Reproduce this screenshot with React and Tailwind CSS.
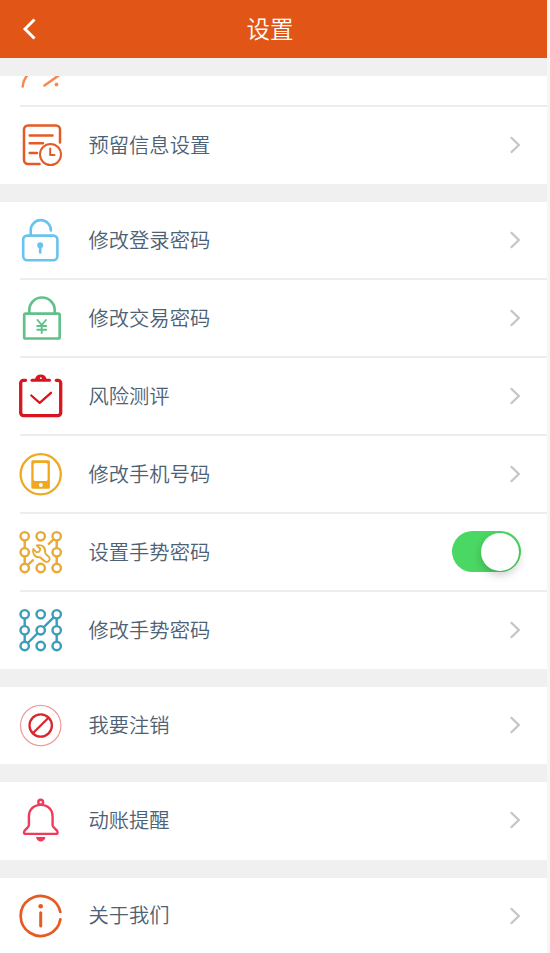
import { clsx } from 'clsx';

const svgProps = {
  width: 48,
  height: 48,
  viewBox: '0 0 48 48',
  fill: 'none',
  strokeLinecap: 'round',
  strokeLinejoin: 'round',
};

function ProfileIcon() {
  return (
    <svg {...svgProps} stroke="#f68a50" strokeWidth="2.6">
      <path d="M5.7 43.5C6 39 7.5 35.5 10.5 32M27.5 42.5L43 31.5" />
      <circle cx="39.5" cy="41.5" r="1.9" fill="#f68a50" stroke="none" />
    </svg>
  );
}

function ReservedInfoIcon() {
  return (
    <svg {...svgProps} stroke="#e35a27" strokeWidth="2.5">
      <path d="M43 21.5V8.5a4 4 0 0 0-4-4H11a4 4 0 0 0-4 4V39a4 4 0 0 0 4 4H22.5" />
      <path d="M12.7 14.5H35.5M12.7 22.3H26M12.7 32H20" />
      <circle cx="33.5" cy="33.5" r="10.5" strokeWidth="2" />
      <path d="M33.2 27.5V34H37.5" strokeWidth="2" />
    </svg>
  );
}

function LoginLockIcon() {
  return (
    <svg {...svgProps} stroke="#69c3ee" strokeWidth="2.6">
      <rect x="6.2" y="19.6" width="34.2" height="24.6" rx="4" />
      <path d="M13.7 19V14A10.1 10.1 0 0 1 33.9 14.5" />
      <circle cx="23.2" cy="29.3" r="3" fill="#69c3ee" stroke="none" />
      <path d="M23.2 30V36.5" />
    </svg>
  );
}

function TradeLockIcon() {
  return (
    <svg {...svgProps} stroke="#62c08a" strokeWidth="2.7">
      <rect x="7.2" y="19.7" width="35.5" height="24.8" rx="1.5" />
      <path d="M12.3 19V16A12.7 12.5 0 0 1 37.7 16V19" />
      <path
        d="M20.5 26L24.7 31L29 26M24.7 31V39M20.2 32H29.2M20.2 35.7H29.2"
        strokeWidth="1.9"
      />
    </svg>
  );
}

function RiskIcon() {
  return (
    <svg {...svgProps} stroke="#d8151f" strokeWidth="3.3">
      <path d="M8.5 8.3H6.5a2.8 2.8 0 0 0-2.8 2.8V40.8a2.8 2.8 0 0 0 2.8 2.8H40.9a2.8 2.8 0 0 0 2.8-2.8V11.1a2.8 2.8 0 0 0-2.8-2.8H39.3" />
      <path d="M15 8.2H32.5" strokeWidth="3" />
      <path d="M17.8 8C18.5 4.3 20.5 2.5 23.8 2.5S29.1 4.3 29.8 8Z" fill="#d8151f" stroke="none" />
      <circle cx="23.8" cy="6.2" r="0.9" fill="#fff" stroke="none" />
      <path d="M14.3 23.5L22.7 30.8L34 20.8" strokeWidth="2.3" />
    </svg>
  );
}

function PhoneIcon() {
  return (
    <svg {...svgProps} stroke="#f0a81e" strokeWidth="2.3">
      <circle cx="23.7" cy="24.3" r="20.1" />
      <rect x="14.3" y="10.3" width="18.6" height="28.4" rx="1.5" fill="#f0a81e" stroke="none" />
      <rect x="16.6" y="13" width="14" height="18" rx="1.5" fill="#fff" stroke="none" />
      <circle cx="23.8" cy="35.1" r="2" fill="#fff" stroke="none" />
    </svg>
  );
}

function Dots({ skipCenter }) {
  const points = [8.3, 24.3, 40].flatMap((cy) => [7.7, 23.7, 39.7].map((cx) => [cx, cy]));
  return points
    .filter((_, i) => !(skipCenter && i === 4))
    .map(([cx, cy]) => <circle key={`${cx}-${cy}`} cx={cx} cy={cy} r="4.2" fill="#fff" />);
}

function GestureSetIcon() {
  return (
    <svg {...svgProps} stroke="#e8a935" strokeWidth="2.4">
      <path d="M7.7 8.3V40M39.7 8.3V40M7.7 40L16 32.2M39.7 8.3L31.8 15.8" />
      <Dots skipCenter />
      <path
        d="M19.8 17.5L23.3 20.8L22.3 23.6L19.5 24.3L16.3 20.9C15.2 25 17.5 29.5 22.3 29.2C24.5 29 26 33 28.8 33.8C31.5 34.4 33.7 31.7 32.3 29.4C31.3 27.5 28.3 26.7 28.1 24.5C28.8 19.5 25 15.9 19.8 17.5Z"
        strokeWidth="1.9"
      />
    </svg>
  );
}

function GestureEditIcon() {
  return (
    <svg {...svgProps} stroke="#3a9dba" strokeWidth="2.4">
      <path d="M7.7 8.3V40M39.7 8.3V40M7.7 40L39.7 8.3" />
      <Dots />
    </svg>
  );
}

function CancelIcon() {
  return (
    <svg {...svgProps} stroke="#d9272e" strokeWidth="2.3">
      <circle cx="23.7" cy="24.5" r="20.2" stroke="#f09a9c" strokeWidth="1.2" />
      <circle cx="23.7" cy="24.5" r="11.2" />
      <path d="M15.9 32.3L31.5 16.7" />
    </svg>
  );
}

function BellIcon() {
  return (
    <svg {...svgProps} stroke="#f03a5c" strokeWidth="2.4">
      <circle cx="23.7" cy="6.2" r="2.4" />
      <path d="M23.7 8.9C16.5 8.9 11.9 13.7 11.9 20.7V29.2C11.9 32.2 7 33.2 7 36.2C7 37.2 7.7 37.9 8.7 37.9H38.9C39.9 37.9 40.6 37.2 40.6 36.2C40.6 33.2 35.6 32.2 35.6 29.2V20.7C35.6 13.7 31 8.9 23.7 8.9Z" />
      <path d="M19 40.9H28.5C28 43.7 26 45.5 23.7 45.5S19.5 43.7 19 40.9Z" fill="#f03a5c" stroke="none" />
    </svg>
  );
}

function InfoIcon() {
  return (
    <svg {...svgProps} stroke="#e55b22" strokeWidth="2.7">
      <path d="M43.3 20A20 20 0 1 0 43.4 27.3" />
      <circle cx="23.7" cy="14.2" r="2.3" fill="#e55b22" stroke="none" />
      <path d="M23.7 20.8V34" strokeWidth="3" />
    </svg>
  );
}

function Arrow() {
  return (
    <svg className="mr-[26px]" width="11" height="18" viewBox="0 0 11 18" fill="none" stroke="#c5c5ca" strokeWidth="2.3">
      <path d="M0.8 1.2L8.8 9L0.8 16.8" />
    </svg>
  );
}

function Toggle() {
  return (
    <div className="mr-[26px] mb-px flex h-[41px] w-[69px] items-center justify-end rounded-full bg-[#4bd763] pr-[2px]">
      <div className="size-[38px] rounded-full bg-white shadow-[0_4px_10px_rgba(0,0,0,0.2)]" />
    </div>
  );
}

function Row({ icon: Icon, label, height = 'h-[78px]', line = false, toggle = false, labelClass = 'pb-[2px]' }) {
  return (
    <div className={clsx('flex shrink-0 flex-col', height)}>
      <div className="flex flex-1 items-center pl-[17px]">
        <Icon />
        <span className={clsx('ml-[23.5px] flex-1 text-[20.3px] leading-none whitespace-nowrap', labelClass)}>
          {label}
        </span>
        {toggle ? <Toggle /> : <Arrow />}
      </div>
      <div className={clsx('ml-5 h-[2px]', line && 'bg-[#ededee]')} />
    </div>
  );
}

export default function App() {
  return (
    <div className="h-[953px] w-[550px] overflow-hidden bg-[#f6f6f6] font-['Noto_Sans_CJK_SC',sans-serif] font-[350] text-[#4d6174]">
      <div className="flex h-full w-[547px] flex-col bg-[#f0f0f0]">
        <header className="grid h-[58px] shrink-0 grid-cols-[60px_1fr_67px] items-center bg-[#e15616] text-white">
          <svg className="ml-[22px]" width="15" height="22" viewBox="0 0 15 22" fill="none" stroke="#fff" strokeWidth="2.9">
            <path d="M12.5 1.5L3 11L12.5 20.5" />
          </svg>
          <h1 className="pb-px text-center text-[23.5px] leading-none font-[350]">设置</h1>
        </header>

        <main className="flex flex-col gap-[18px] pt-[18px]">
          <section className="bg-white">
            {/* first row is scrolled under the header */}
            <div className="flex h-[31px] flex-col justify-end overflow-hidden">
              <Row icon={ProfileIcon} label="个人信息修改" line labelClass="pb-[5px]" />
            </div>
            <Row icon={ReservedInfoIcon} label="预留信息设置" height="h-[77px]" labelClass="pb-0" />
          </section>

          <section className="bg-white">
            <Row icon={LoginLockIcon} label="修改登录密码" line />
            <Row icon={TradeLockIcon} label="修改交易密码" line />
            <Row icon={RiskIcon} label="风险测评" line />
            <Row icon={PhoneIcon} label="修改手机号码" line />
            <Row icon={GestureSetIcon} label="设置手势密码" line toggle />
            <Row icon={GestureEditIcon} label="修改手势密码" height="h-[77px]" labelClass="pb-0" />
          </section>

          <section className="bg-white">
            <Row icon={CancelIcon} label="我要注销" height="h-[77px]" labelClass="pb-0" />
          </section>

          <section className="bg-white">
            <Row icon={BellIcon} label="动账提醒" />
          </section>

          <section className="bg-white">
            <Row icon={InfoIcon} label="关于我们" height="h-[77px]" />
          </section>
        </main>
      </div>
    </div>
  );
}
